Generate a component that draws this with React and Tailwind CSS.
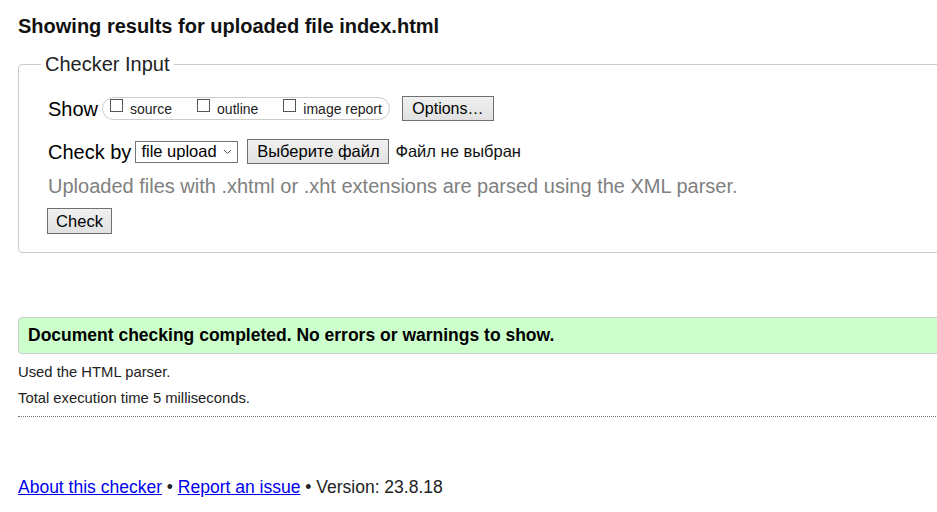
import React from "react";

const Box = () => (
  <span className="inline-block w-[13px] h-[13px] border border-[#555] bg-white mr-[7px] mb-[5px]" />
);

const Btn = ({ children, className = "" }) => (
  <button
    type="button"
    className={`border border-[#707070] bg-gradient-to-b from-[#f0f0f0] to-[#e1e1e1] leading-none text-black ${className}`}
  >
    {children}
  </button>
);

export default function App() {
  return (
    <div className="w-[937px] h-[512px] overflow-hidden bg-white text-black font-['Liberation_Sans',Arial,sans-serif]">
      <div className="w-[1000px] pl-[18px]">
        <h2 className="text-[20px] font-bold leading-[23px] pt-[15px] text-[#111]">
          Showing results for uploaded file index.html
        </h2>

        <fieldset className="mt-[15px] border border-[#ccc] rounded-[4px] pl-[29px] pb-[18px]">
          <legend className="text-[20px] leading-[23px] ml-[-7px] px-[4px] text-[#222]">Checker Input</legend>

          <div className="flex items-center h-[25px] mt-[20px]">
            <span className="text-[20px] mr-[4px]">Show</span>
            <div className="flex items-end h-[23px] border border-[#ccc] rounded-full pl-[7px] pr-[7px] pb-[2px] text-[14px] leading-[16px] text-[#222]">
              <label className="flex items-end"><Box />source</label>
              <label className="flex items-end ml-[25px]"><Box />outline</label>
              <label className="flex items-end ml-[25px]"><Box />image report</label>
            </div>
            <Btn className="ml-[12px] w-[92px] h-[25px] text-[16px]">Options…</Btn>
          </div>

          <div className="flex items-center h-[25px] mt-[18px]">
            <span className="text-[20px] mr-[4px]">Check by</span>
            <div className="flex items-center justify-between w-[103px] h-[22px] border border-[#767676] pl-[5px] pr-[5px] text-[16.5px] bg-white">
              <span>file upload</span>
              <svg width="9" height="6" viewBox="0 0 9 6" className="mt-[1px]">
                <path d="M1 1l3.5 3.5L8 1" fill="none" stroke="#555" strokeWidth="1" />
              </svg>
            </div>
            <Btn className="ml-[9px] w-[142px] h-[25px] text-[16.5px]">Выберите файл</Btn>
            <span className="text-[16.5px] ml-[6px] text-[#111]">Файл не выбран</span>
          </div>

          <p className="text-[20px] leading-[24px] text-[#808080] mt-[10px]">
            Uploaded files with .xhtml or .xht extensions are parsed using the XML parser.
          </p>

          <Btn className="mt-[10px] ml-[-1px] w-[65px] h-[26px] block text-[16.5px]">Check</Btn>
        </fieldset>

        <div className="mt-[64px] h-[37px] flex items-center pl-[9px] bg-[#ccffcc] border border-[#ccc] rounded-l-[4px]">
          <span className="text-[17.5px] font-bold text-black">
            Document checking completed. No errors or warnings to show.
          </span>
        </div>

        <p className="text-[14.8px] leading-[18px] mt-[9px] text-[#222]">Used the HTML parser.</p>
        <p className="text-[14.8px] leading-[18px] mt-[8px] text-[#222]">Total execution time 5 milliseconds.</p>
        <div className="mt-[9px] border-t border-dotted border-[#777]" />

        <div className="mt-[60px] text-[17.5px] leading-[20px] text-[#222]">
          <a href="#" className="text-[#0000ee] underline">About this checker</a>
          {" • "}
          <a href="#" className="text-[#0000ee] underline">Report an issue</a>
          {" • Version: 23.8.18"}
        </div>
      </div>
    </div>
  );
}
